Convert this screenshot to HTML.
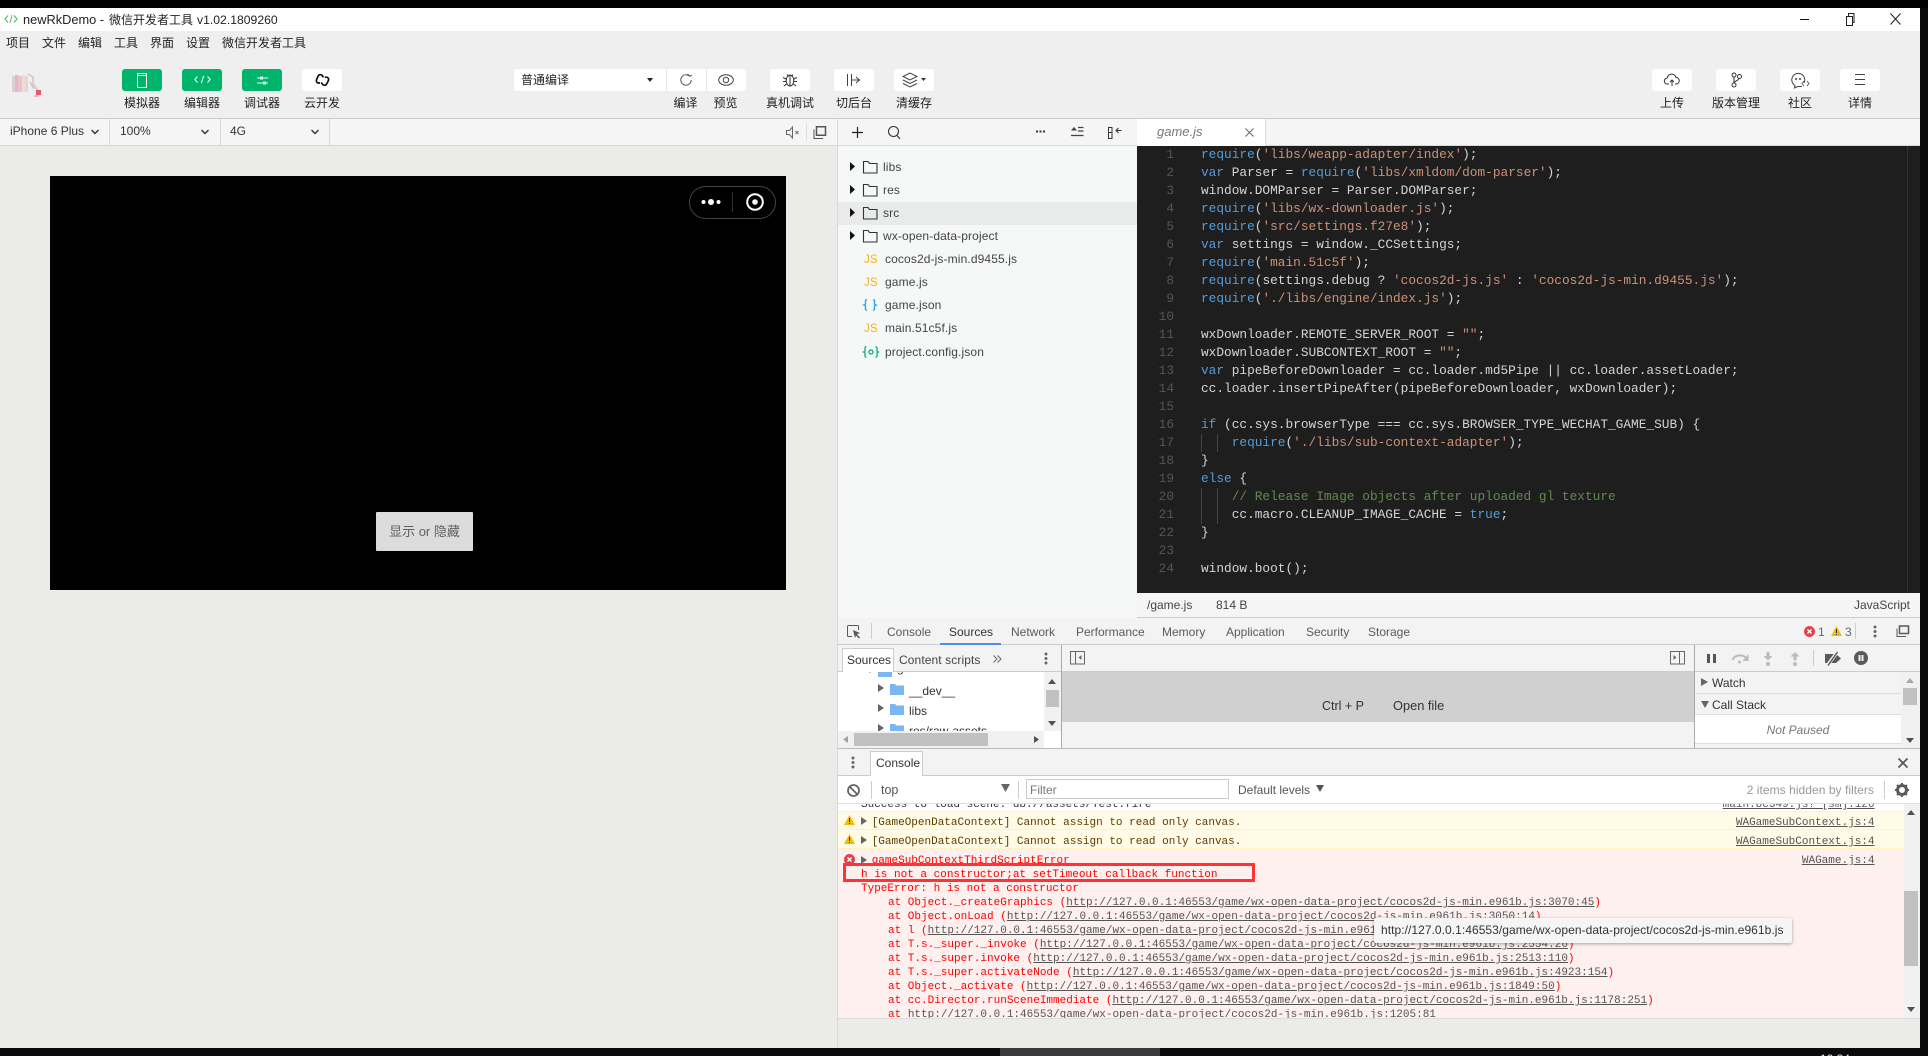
<!DOCTYPE html>
<html><head><meta charset="utf-8"><title>newRkDemo</title>
<style>
html,body{margin:0;padding:0;background:#050505;width:1928px;height:1056px;overflow:hidden}
body{position:relative;font-family:"Liberation Sans","Noto Sans CJK SC",sans-serif;font-size:12px;color:#333}
.a{position:absolute}
.t{position:absolute;white-space:nowrap;line-height:16px;height:16px}
.c{text-align:center}
svg{position:absolute;overflow:visible}
.btn{position:absolute;top:69px;height:22px;width:40px;border-radius:3px;background:#fff}
.g{background:#00b46c}
.lab{position:absolute;top:95px;line-height:16px;font-size:12px;color:#222;white-space:nowrap;text-align:center;font-family:"Noto Sans CJK SC","Liberation Sans",sans-serif}
.m{position:absolute;top:35px;line-height:16px;font-size:12px;color:#222;white-space:nowrap;font-family:"Noto Sans CJK SC",sans-serif}
.tree{position:absolute;left:0;white-space:nowrap;font-size:12px;line-height:16px;color:#444;letter-spacing:.12px}
.mono{font-family:"Liberation Mono",monospace}
#code{position:absolute;left:1201px;top:146px;font-family:"Liberation Mono",monospace;font-size:12.8px;line-height:18px;color:#d4d4d4;white-space:pre}
#nums{position:absolute;left:1140px;width:34px;top:146px;font-family:"Liberation Mono",monospace;font-size:12.8px;line-height:18px;color:#555;text-align:right;white-space:pre}
.k{color:#569cd6}.s{color:#ce9178}.cm{color:#608b4e}
.dt{position:absolute;top:624px;line-height:16px;font-size:12px;color:#5a5a5a;white-space:nowrap}
.cl{position:absolute;left:0;white-space:pre;font-family:"Liberation Mono",monospace;font-size:11px;line-height:14px;color:#f00}
.cl u{color:#545454}
.src{position:absolute;right:53.5px;white-space:pre;font-family:"Liberation Mono",monospace;font-size:11px;line-height:14px;color:#545454;text-decoration:underline}
</style></head><body>

<!-- window -->
<div class="a" style="left:0;top:8px;width:1920px;height:1040px;background:#ebebe7"></div>
<div class="a" style="left:0;top:8px;width:1920px;height:23px;background:#fff"></div>
<div class="a" style="left:0;top:31px;width:1920px;height:87px;background:#efefef"></div>
<div class="a" style="left:0;top:118px;width:1920px;height:1px;background:#ccc"></div>

<!-- title -->
<svg style="left:4px;top:14px" width="14" height="10" viewBox="0 0 14 10"><path d="M4 1.500 1 5l3 3.500M10 1.500 13 5l-3 3.500" fill="none" stroke="#5cc45c" stroke-width="1.300"/><path d="M8 1 6 9" stroke="#999" stroke-width="1"/></svg>
<div class="t" style="left:23px;top:12px;color:#222;font-size:12.800px">newRkDemo -</div>
<div class="t" style="left:109px;top:12px;color:#222;font-size:12px;font-family:'Noto Sans CJK SC',sans-serif">微信开发者工具</div>
<div class="t" style="left:197px;top:12px;color:#222;font-size:12.200px">v1.02.1809260</div>
<!-- window controls -->
<div class="a" style="left:1800px;top:19px;width:9px;height:1px;background:#111"></div>
<svg style="left:1844px;top:13px" width="11" height="13"><path d="M2.500 3.500h6v9h-6zM4.500 3.500V.5h5.500v9H8.500" fill="none" stroke="#222"/></svg>
<svg style="left:1890px;top:13px" width="11" height="12"><path d="M.5.5 10.500 11.500M10.500.5.5 11.500" stroke="#222" stroke-width="1"/></svg>

<!-- menu -->
<div class="m" style="left:6px">项目</div><div class="m" style="left:42px">文件</div><div class="m" style="left:78px">编辑</div><div class="m" style="left:114px">工具</div><div class="m" style="left:150px">界面</div><div class="m" style="left:186px">设置</div><div class="m" style="left:222px">微信开发者工具</div>

<!-- logo -->
<svg style="left:12px;top:72px;opacity:.8" width="32" height="26" viewBox="0 0 32 26">
<rect x="0" y="4" width="3" height="16" fill="#d9c9cf"/><rect x="3" y="3" width="3" height="17" fill="#e3a9bd"/><rect x="6" y="4" width="4" height="16" fill="#e7b7c6"/><rect x="10" y="3" width="3" height="17" fill="#eedbc9"/><rect x="13" y="4" width="3" height="16" fill="#dfd0d0"/>
<path d="M16 2l5 3v7l6 8" fill="none" stroke="#c9b9bb" stroke-width="1.500"/><path d="M18 10l4 7" stroke="#bbb" stroke-width="1.400"/>
<rect x="24" y="18" width="5" height="5" fill="#e7364a"/><rect x="22" y="23" width="5" height="2" fill="#e8b0b5"/>
</svg>

<!-- left toolbar buttons -->
<div class="btn g" style="left:122px"></div>
<svg style="left:137px;top:73px" width="10" height="14"><rect x=".5" y=".5" width="9" height="14" fill="none" stroke="#fff"/><path d="M1 2.500h8" stroke="#fff"/></svg>
<div class="btn g" style="left:182px"></div>
<svg style="left:194px;top:75px" width="17" height="9" viewBox="0 0 17 9" fill="none" stroke="#fff" stroke-width="1"><path d="M3.500 1.500.8 4.500l2.700 3M13.500 1.500l2.700 3-2.700 3M9.600.8 7.400 8.200"/></svg>
<div class="btn g" style="left:242px"></div>
<svg style="left:256px;top:75px" width="13" height="11" viewBox="0 0 13 11"><path d="M1 3h3M7 3h5M1 8h6M10 8h2" stroke="#bfe9d6" stroke-width="1.200"/><rect x="4" y="1.500" width="3" height="3" fill="#dff5ea"/><rect x="7" y="6.500" width="3" height="3" fill="#dff5ea"/></svg>
<div class="btn" style="left:302px"></div>
<svg style="left:315px;top:73px" width="15" height="14" viewBox="0 0 15 14" fill="none" stroke="#111" stroke-width="1.700"><path d="M8.500 4.200 7.300 2.600C6.200 1.300 4 1.400 3.200 3L1.600 6.500c-.8 1.700.2 3.500 2 3.500H5"/><path d="M6.200 9.500 7.600 11.400c1 1.300 3.200 1.200 4-.4l1.700-3.200c.9-1.700-.2-3.600-2.100-3.600H9.800"/></svg>
<div class="lab" style="left:122px;width:40px">模拟器</div><div class="lab" style="left:182px;width:40px">编辑器</div><div class="lab" style="left:242px;width:40px">调试器</div><div class="lab" style="left:302px;width:40px">云开发</div>

<!-- compile group -->
<div class="a" style="left:514px;top:69px;width:232px;height:22px;background:#fff;border-radius:3px"></div>
<div class="a" style="left:666px;top:69px;width:1px;height:22px;background:#e6e6e6"></div>
<div class="a" style="left:706px;top:69px;width:1px;height:22px;background:#e6e6e6"></div>
<div class="t" style="left:521px;top:72px;color:#222;font-family:'Noto Sans CJK SC',sans-serif">普通编译</div>
<svg style="left:647px;top:78px" width="6" height="4"><path d="M0 0h6L3 4z" fill="#222"/></svg>
<svg style="left:679px;top:73px" width="14" height="14" viewBox="0 0 14 14" fill="none" stroke="#555"><path d="M10.600 3.200A5.200 5.200 0 1 0 12.200 7"/><path d="M8.600 1 11 3.400 13 2" stroke-width="1"/></svg>
<svg style="left:718px;top:74px" width="16" height="12" viewBox="0 0 16 12" fill="none" stroke="#444"><ellipse cx="8" cy="6" rx="7.300" ry="5.200"/><circle cx="8" cy="6" r="2.700"/></svg>
<div class="lab" style="left:666px;width:39px">编译</div><div class="lab" style="left:706px;width:39px">预览</div>

<div class="btn" style="left:770px"></div>
<svg style="left:782px;top:72px" width="16" height="16" viewBox="0 0 16 16" fill="none" stroke="#333"><ellipse cx="8" cy="8.500" rx="3.800" ry="5.500"/><path d="M8 3v11M5 2.500l1.500 2M11 2.500l-1.500 2M4 7 1 5.500M4 9.500H1M4.500 12 2 14M12 7l3-1.500M12 9.500h3M11.500 12l2.500 2"/></svg>
<div class="lab" style="left:763px;width:54px">真机调试</div>
<div class="btn" style="left:834px"></div>
<svg style="left:846px;top:74px" width="16" height="12" viewBox="0 0 16 12" fill="none" stroke="#444"><path d="M1.500 0v12M5.500 0v12M5.500 6H13M10 3l3.500 3L10 9"/></svg>
<div class="lab" style="left:834px;width:40px">切后台</div>
<div class="btn" style="left:894px"></div>
<svg style="left:902px;top:72px" width="24" height="16" viewBox="0 0 24 16" fill="none" stroke="#444"><path d="M8 1 1 4.500 8 8l7-3.500zM1 8l7 3.500L15 8M1 11.500 8 15l7-3.500"/><path d="M19 6h5l-2.500 3z" fill="#333" stroke="none"/></svg>
<div class="lab" style="left:894px;width:40px">清缓存</div>

<!-- right toolbar -->
<div class="btn" style="left:1652px"></div>
<svg style="left:1664px;top:74px" width="16" height="13" viewBox="0 0 16 13" fill="none" stroke="#333"><path d="M5 10H3.500a3 3 0 0 1-.3-6A4.500 4.500 0 0 1 12 3.500 3.200 3.200 0 0 1 12 10h-1"/><path d="M8 12V6M6 8l2-2 2 2"/></svg>
<div class="btn" style="left:1716px"></div>
<svg style="left:1731px;top:72px" width="11" height="16" viewBox="0 0 11 16" fill="none" stroke="#333"><circle cx="3" cy="3" r="2"/><circle cx="8.500" cy="4.500" r="2"/><circle cx="3" cy="13" r="2"/><path d="M3 5v6M8 6.500c0 2-5 2.500-5 4.500"/></svg>
<div class="btn" style="left:1780px"></div>
<svg style="left:1791px;top:72px" width="18" height="17" viewBox="0 0 18 17" fill="none" stroke="#444"><path d="M13 11A6.500 6.500 0 1 0 4 13.500L3.500 16l3-1.500H11"/><circle cx="5" cy="7" r="1" fill="#444" stroke="none"/><circle cx="9" cy="7" r="1" fill="#444" stroke="none"/><path d="M13 9l-2 2.500 2 2.500M16 9l2 2.500-2 2.500" stroke-width=".8"/></svg>
<div class="btn" style="left:1840px"></div>
<svg style="left:1855px;top:74px" width="10" height="11"><path d="M0 .5h10M0 5.500h10M0 10.500h10" stroke="#444"/></svg>
<div class="lab" style="left:1652px;width:40px">上传</div><div class="lab" style="left:1709px;width:54px">版本管理</div><div class="lab" style="left:1780px;width:40px">社区</div><div class="lab" style="left:1840px;width:40px">详情</div>

<!-- simulator toolbar -->
<div class="a" style="left:0;top:119px;width:838px;height:26px;background:#f5f5f5;border-bottom:1px solid #d8d8d8"></div>
<div class="a" style="left:109px;top:119px;width:1px;height:26px;background:#d8d8d8"></div>
<div class="a" style="left:220px;top:119px;width:1px;height:26px;background:#d8d8d8"></div>
<div class="a" style="left:329px;top:119px;width:1px;height:26px;background:#d8d8d8"></div>
<div class="t" style="left:10px;top:123px;color:#333;font-size:12px">iPhone 6 Plus</div>
<div class="t" style="left:120px;top:123px;color:#333;font-size:12px">100%</div>
<div class="t" style="left:230px;top:123px;color:#333;font-size:12px">4G</div>
<svg style="left:91px;top:129px" width="8" height="6" fill="none" stroke="#333" stroke-width="1.400"><path d="M.5 1 4 4.500 7.500 1"/></svg>
<svg style="left:201px;top:129px" width="8" height="6" fill="none" stroke="#333" stroke-width="1.400"><path d="M.5 1 4 4.500 7.500 1"/></svg>
<svg style="left:311px;top:129px" width="8" height="6" fill="none" stroke="#333" stroke-width="1.400"><path d="M.5 1 4 4.500 7.500 1"/></svg>
<svg style="left:786px;top:126px" width="14" height="13" fill="none" stroke="#666"><path d="M.5 4.500h3l3-3.500v11l-3-3.500h-3z"/><path d="M9.500 5l3 3M12.500 5l-3 3" stroke-width=".9"/></svg>
<div class="a" style="left:806px;top:124px;width:1px;height:16px;background:#ddd"></div>
<svg style="left:813px;top:126px" width="13" height="13" fill="none" stroke="#555"><path d="M3.500 .8h9v8.500h-9z" stroke-width="1.500"/><path d="M1 3.500v9h9" stroke-width="1"/></svg>
<div class="a" style="left:837px;top:119px;width:1px;height:930px;background:#d8d8d8"></div>

<!-- game -->
<div class="a" style="left:50px;top:176px;width:736px;height:414px;background:#000"></div>
<div class="a" style="left:689px;top:186px;width:85px;height:31px;border:1px solid #444;border-radius:17px;background:#000"></div>
<svg style="left:700px;top:196px" width="22" height="12"><circle cx="3.500" cy="6" r="2" fill="#fff"/><circle cx="11" cy="6" r="3" fill="#fff"/><circle cx="18.500" cy="6" r="2" fill="#fff"/></svg>
<div class="a" style="left:732px;top:192px;width:1px;height:20px;background:#333"></div>
<svg style="left:745px;top:192px" width="20" height="20"><circle cx="10" cy="10" r="7.800" fill="none" stroke="#fff" stroke-width="2"/><circle cx="10" cy="10" r="2.800" fill="#fff"/></svg>
<div class="a" style="left:376px;top:512px;width:97px;height:39px;background:#dcdcdc;border-radius:1px"></div>
<div class="a c" style="left:376px;top:523px;width:97px;line-height:17px;font-size:13px;color:#5f5f5f;font-family:'Liberation Sans','Noto Sans CJK SC',sans-serif">显示 or 隐藏</div>

<!-- file tree -->
<div class="a" style="left:838px;top:119px;width:299px;height:26px;background:#f5f5f5;border-bottom:1px solid #d8d8d8"></div>
<div class="a" style="left:838px;top:146px;width:299px;height:472px;background:#f6f7f7"></div>
<div class="a" style="left:838px;top:202px;width:299px;height:23px;background:#e9eaea"></div>
<svg style="left:852px;top:127px" width="12" height="12"><path d="M5.500 0v11M0 5.500h11" stroke="#222" stroke-width="1.200"/></svg>
<svg style="left:888px;top:126px" width="13" height="14" fill="none" stroke="#333" stroke-width="1.100"><circle cx="5.500" cy="5.500" r="5"/><path d="M9 9.500l3 3.500"/></svg>
<svg style="left:1036px;top:130px" width="9" height="3"><path d="M0 .5h2v2H0zM3.500 .5h2v2h-2zM7 .5h2v2H7z" fill="#333"/></svg>
<svg style="left:1071px;top:127px" width="13" height="10"><path d="M3 0 6 3.500H0z" fill="#444"/><path d="M7 .5h5.500M7 4h5.500M0 8.500h12.500" stroke="#444" stroke-width="1.200"/></svg>
<svg style="left:1108px;top:127px" width="14" height="13" fill="none" stroke="#333"><rect x=".5" y=".5" width="3.500" height="11"/><path d="M.5 5.500h3.500M8 3.500h5.500M10.500 1 8 3.500 10.500 6" stroke-width="1"/></svg>

<!-- tree rows -->
<svg style="left:850px;top:162px" width="6" height="190" fill="#111"><path d="M0 0v9l5-4.500zM0 23v9l5-4.500zM0 46v9l5-4.500zM0 69v9l5-4.500z"/></svg>
<svg style="left:863px;top:160px" width="15" height="90" fill="none" stroke="#333" stroke-width="1.100"><path d="M.5 1.500h4.500l1.500 2h7.500v9.500H.5z"/><path d="M.5 24.500h4.500l1.500 2h7.500v9.500H.5zM.5 47.500h4.500l1.500 2h7.500v9.500H.5zM.5 70.500h4.500l1.500 2h7.500v9.500H.5z"/></svg>
<div class="tree" style="left:883px;top:159px">libs</div>
<div class="tree" style="left:883px;top:182px">res</div>
<div class="tree" style="left:883px;top:205px">src</div>
<div class="tree" style="left:883px;top:228px">wx-open-data-project</div>
<div class="tree" style="left:885px;top:251px">cocos2d-js-min.d9455.js</div>
<div class="tree" style="left:885px;top:274px">game.js</div>
<div class="tree" style="left:885px;top:297px">game.json</div>
<div class="tree" style="left:885px;top:320px">main.51c5f.js</div>
<div class="tree" style="left:885px;top:344px">project.config.json</div>
<div class="t" style="left:864px;top:252px;color:#f5b21c;font-size:11.500px;letter-spacing:.3px">JS</div>
<div class="t" style="left:864px;top:275px;color:#f5b21c;font-size:11.500px;letter-spacing:.3px">JS</div>
<div class="t" style="left:864px;top:321px;color:#f5b21c;font-size:11.500px;letter-spacing:.3px">JS</div>
<svg style="left:863px;top:299px" width="14" height="12" fill="none" stroke="#26a6e8" stroke-width="1.400"><path d="M4 .7C2 .7 2.500 2.500 2.500 4S2.500 5.500 1 6c1.500.5 1.500 .5 1.500 2S2 11.300 4 11.300M10 .7c2 0 1.500 1.800 1.500 3.300s0 1.500 1.500 2c-1.500.5-1.500.5-1.500 2s.5 3.300-1.500 3.300"/></svg>
<svg style="left:863px;top:346px" width="16" height="12" fill="none" stroke="#12b87a" stroke-width="1.400"><path d="M3.500 .7C1.500 .7 2 2.500 2 4S2 5.500.7 6C2 6.500 2 6.500 2 8s-.5 3.300 1.500 3.300M12.500 .7c2 0 1.500 1.800 1.500 3.300s0 1.500 1.300 2C14 6.500 14 6.500 14 8s.5 3.300-1.500 3.300"/><circle cx="8" cy="6" r="2"/></svg>

<!-- editor tab -->
<div class="a" style="left:1137px;top:119px;width:783px;height:27px;background:#f5f5f5;"></div>
<div class="a" style="left:1137px;top:145px;width:783px;height:1px;background:#d8d8d8"></div>
<div class="a" style="left:1137px;top:119px;width:129px;height:27px;background:#fff;border-right:1px solid #ddd;box-sizing:border-box"></div>
<div class="t" style="left:1157px;top:124px;font-style:italic;color:#777;font-size:13px">game.js</div>
<svg style="left:1245px;top:128px" width="9" height="9"><path d="M.5.5l8 8M8.500.5l-8 8" stroke="#666" stroke-width="1"/></svg>

<!-- code -->
<div class="a" style="left:1137px;top:146px;width:783px;height:447px;background:#1e1e1e"></div>
<div class="a" style="left:1907px;top:146px;width:1px;height:447px;background:#333"></div>
<div class="a" style="left:1201px;top:434px;width:1px;height:18px;background:#444"></div>
<div class="a" style="left:1217px;top:434px;width:1px;height:18px;background:#444"></div>
<div class="a" style="left:1201px;top:488px;width:1px;height:36px;background:#444"></div>
<div class="a" style="left:1217px;top:488px;width:1px;height:36px;background:#444"></div>
<div id="nums">1
2
3
4
5
6
7
8
9
10
11
12
13
14
15
16
17
18
19
20
21
22
23
24</div>
<div id="code"><span class="k">require</span>(<span class="s">'libs/weapp-adapter/index'</span>);
<span class="k">var</span> Parser = <span class="k">require</span>(<span class="s">'libs/xmldom/dom-parser'</span>);
window.DOMParser = Parser.DOMParser;
<span class="k">require</span>(<span class="s">'libs/wx-downloader.js'</span>);
<span class="k">require</span>(<span class="s">'src/settings.f27e8'</span>);
<span class="k">var</span> settings = window._CCSettings;
<span class="k">require</span>(<span class="s">'main.51c5f'</span>);
<span class="k">require</span>(settings.debug ? <span class="s">'cocos2d-js.js'</span> : <span class="s">'cocos2d-js-min.d9455.js'</span>);
<span class="k">require</span>(<span class="s">'./libs/engine/index.js'</span>);

wxDownloader.REMOTE_SERVER_ROOT = <span class="s">""</span>;
wxDownloader.SUBCONTEXT_ROOT = <span class="s">""</span>;
<span class="k">var</span> pipeBeforeDownloader = cc.loader.md5Pipe || cc.loader.assetLoader;
cc.loader.insertPipeAfter(pipeBeforeDownloader, wxDownloader);

<span class="k">if</span> (cc.sys.browserType === cc.sys.BROWSER_TYPE_WECHAT_GAME_SUB) {
    <span class="k">require</span>(<span class="s">'./libs/sub-context-adapter'</span>);
}
<span class="k">else</span> {
    <span class="cm">// Release Image objects after uploaded gl texture</span>
    cc.macro.CLEANUP_IMAGE_CACHE = <span class="k">true</span>;
}

window.boot();</div>

<!-- status bar -->
<div class="a" style="left:1137px;top:593px;width:783px;height:24px;background:#f5f5f5;border-bottom:1px solid #ccc"></div>
<div class="t" style="left:1147px;top:597px;color:#444;font-size:12px">/game.js</div>
<div class="t" style="left:1216px;top:597px;color:#444;font-size:12px">814 B</div>
<div class="t" style="right:18px;top:597px;color:#444;font-size:12px">JavaScript</div>

<!-- devtools -->
<div class="a" style="left:838px;top:618px;width:1082px;height:400px;background:#f3f3f3"></div>
<div class="a" style="left:838px;top:644px;width:1082px;height:1px;background:#ccc"></div>
<svg style="left:847px;top:625px" width="14" height="14" fill="none" stroke="#5a5a5a"><path d="M5 11.500H1.500a1 1 0 0 1-1-1v-9a1 1 0 0 1 1-1h9a1 1 0 0 1 1 1V5"/><path d="M6 5l7 3-3 1.200L13 12.500 12 13.500 9 10.500 8 13z" fill="#5a5a5a" stroke="none"/></svg>
<div class="a" style="left:871px;top:623px;width:1px;height:16px;background:#ccc"></div>
<div class="dt" style="left:887px">Console</div>
<div class="dt" style="left:949px;color:#333">Sources</div>
<div class="dt" style="left:1011px">Network</div>
<div class="dt" style="left:1076px">Performance</div>
<div class="dt" style="left:1162px">Memory</div>
<div class="dt" style="left:1226px">Application</div>
<div class="dt" style="left:1306px">Security</div>
<div class="dt" style="left:1368px">Storage</div>
<div class="a" style="left:940px;top:643px;width:61px;height:2px;background:#4a8ee6"></div>
<!-- error/warn counters -->
<svg style="left:1804px;top:626px" width="11" height="11"><circle cx="5.500" cy="5.500" r="5.500" fill="#e8404a"/><path d="M3.500 3.500l4 4M7.500 3.500l-4 4" stroke="#fff" stroke-width="1.300"/></svg>
<div class="t" style="left:1818px;top:624px;color:#666;font-size:12px">1</div>
<svg style="left:1831px;top:626px" width="11" height="10"><path d="M5.500 0 11 10H0z" fill="#f2bb0c"/><path d="M5.500 3v4M5.500 8v1" stroke="#333" stroke-width="1"/></svg>
<div class="t" style="left:1845px;top:624px;color:#666;font-size:12px">3</div>
<div class="a" style="left:1855px;top:623px;width:1px;height:16px;background:#ccc"></div>
<svg style="left:1873px;top:625px" width="4" height="13" fill="#666"><circle cx="2" cy="2" r="1.500"/><circle cx="2" cy="6.500" r="1.500"/><circle cx="2" cy="11" r="1.500"/></svg>
<svg style="left:1896px;top:625px" width="13" height="12" fill="none" stroke="#5a5a5a"><path d="M3.500 1h9v7.500h-9z" stroke-width="1.500"/><path d="M1 3.500v8h9" stroke-width="1"/></svg>

<!-- sources panel row -->
<div class="a" style="left:838px;top:671px;width:1082px;height:1px;background:#ccc"></div>
<div class="a" style="left:1061px;top:645px;width:1px;height:103px;background:#aaa"></div>
<div class="a" style="left:1694px;top:645px;width:1px;height:103px;background:#aaa"></div>
<div class="a" style="left:842px;top:648px;width:52px;height:24px;background:#fff;border:1px solid #ccc;border-bottom:none;box-sizing:border-box"></div>
<div class="t" style="left:847px;top:652px;color:#333">Sources</div>
<div class="t" style="left:899px;top:652px;color:#444;letter-spacing:.1px">Content scripts</div>
<svg style="left:993px;top:655px" width="9" height="9" fill="none" stroke="#666"><path d="M.5.500 4 4 .5 7.500M4.500.500 8 4 4.500 7.500"/></svg>
<svg style="left:1044px;top:652px" width="4" height="13" fill="#666"><circle cx="2" cy="2" r="1.500"/><circle cx="2" cy="6.500" r="1.500"/><circle cx="2" cy="11" r="1.500"/></svg>
<!-- navigator -->
<div class="a" style="left:838px;top:672px;width:223px;height:76px;background:#fff;overflow:hidden">
  <svg style="left:29px;top:-3px" width="8" height="6"><path d="M0 0h6L3 4z" fill="#666"/></svg>
  <div class="a" style="left:40px;top:-6px;width:14px;height:11px;background:#7ab6f3"></div>
  <div class="t" style="left:59px;top:-12px;color:#333">game</div>
  <svg style="left:40px;top:12px" width="7" height="9"><path d="M0 0v8l6-4z" fill="#666"/></svg>
  <svg style="left:52px;top:11px" width="14" height="12"><path d="M0 1h5l1.500 1.500H14V12H0z" fill="#7ab6f3"/></svg>
  <div class="t" style="left:71px;top:11px;color:#333">__dev__</div>
  <svg style="left:40px;top:32px" width="7" height="9"><path d="M0 0v8l6-4z" fill="#666"/></svg>
  <svg style="left:52px;top:31px" width="14" height="12"><path d="M0 1h5l1.500 1.500H14V12H0z" fill="#7ab6f3"/></svg>
  <div class="t" style="left:71px;top:31px;color:#333">libs</div>
  <svg style="left:40px;top:52px" width="7" height="9"><path d="M0 0v8l6-4z" fill="#666"/></svg>
  <svg style="left:52px;top:51px" width="14" height="12"><path d="M0 1h5l1.500 1.500H14V12H0z" fill="#7ab6f3"/></svg>
  <div class="t" style="left:71px;top:51px;color:#333">res/raw-assets</div>
  <div class="a" style="left:0;top:59px;width:206px;height:17px;background:#f1f1f1"></div>
  <div class="a" style="left:16px;top:61px;width:134px;height:13px;background:#c1c1c1"></div>
  <svg style="left:5px;top:64px" width="6" height="8"><path d="M5 0v7L0 3.500z" fill="#a0a0a0"/></svg>
  <svg style="left:196px;top:64px" width="6" height="8"><path d="M0 0v7l5-3.500z" fill="#505050"/></svg>
  <div class="a" style="left:206px;top:0;width:17px;height:59px;background:#f1f1f1"></div>
  <div class="a" style="left:208px;top:18px;width:13px;height:17px;background:#c1c1c1"></div>
  <svg style="left:210px;top:7px" width="8" height="6"><path d="M0 5h8L4 0z" fill="#505050"/></svg>
  <svg style="left:210px;top:49px" width="8" height="6"><path d="M0 0h8L4 5z" fill="#505050"/></svg>
</div>
<!-- center -->
<svg style="left:1070px;top:651px" width="15" height="14" fill="none" stroke="#666"><rect x=".5" y=".5" width="14" height="12.500"/><path d="M5.500 .5v12.500"/><path d="M11.500 4v5l-3-2.500z" fill="#666" stroke="none"/></svg>
<svg style="left:1670px;top:651px" width="15" height="14" fill="none" stroke="#666"><rect x=".5" y=".5" width="14" height="12.500"/><path d="M9.500 .5v12.500"/><path d="M3.500 4v5l3-2.500z" fill="#666" stroke="none"/></svg>
<div class="a" style="left:1062px;top:672px;width:632px;height:50px;background:#d0d0d0"></div>
<div class="t" style="left:1322px;top:698px;color:#333;font-size:12.500px">Ctrl + P</div>
<div class="t" style="left:1393px;top:698px;color:#333;font-size:12.800px">Open file</div>
<!-- debugger icons -->
<svg style="left:1707px;top:654px" width="9" height="9"><path d="M0 0h3v9H0zM6 0h3v9H6z" fill="#555"/></svg>
<svg style="left:1731px;top:653px" width="18" height="10" fill="none"><path d="M1.500 7A7.500 6 0 0 1 15 5" stroke="#bbb" stroke-width="2"/><path d="M17.500 1v7h-6z" fill="#bbb"/><circle cx="8.500" cy="9" r="1.500" fill="#bbb"/></svg>
<svg style="left:1763px;top:652px" width="10" height="14" fill="#bbb"><path d="M3.500 0h3v4H9.500L5 8.500.5 4h3z"/><circle cx="5" cy="12" r="2"/></svg>
<svg style="left:1790px;top:652px" width="10" height="14" fill="#bbb"><path d="M5 0l4.500 4.500h-3v4h-3v-4h-3z"/><circle cx="5" cy="12" r="2"/></svg>
<div class="a" style="left:1813px;top:650px;width:1px;height:16px;background:#ccc"></div>
<svg style="left:1824px;top:651px" width="18" height="15"><path d="M1 3h11l5 4.500L12 12H1z" fill="#5a5a5a"/><path d="M3 15 14 0" stroke="#f3f3f3" stroke-width="3.500"/><path d="M4 14.500 13.500 1" stroke="#5a5a5a" stroke-width="1.500"/></svg>
<svg style="left:1854px;top:651px" width="14" height="14"><circle cx="7" cy="7" r="7" fill="#5a5a5a"/><path d="M4.500 4h2v6h-2zM7.500 4h2v6h-2z" fill="#f3f3f3"/></svg>
<!-- side panes -->
<div class="a" style="left:1695px;top:693px;width:206px;height:1px;background:#ddd"></div>
<div class="a" style="left:1695px;top:714px;width:206px;height:1px;background:#ddd"></div>
<div class="a" style="left:1695px;top:715px;width:206px;height:28px;background:#fff"></div>
<div class="a" style="left:1695px;top:743px;width:206px;height:1px;background:#ddd"></div>
<svg style="left:1701px;top:678px" width="8" height="8"><path d="M0 0v8l7-4z" fill="#666"/></svg>
<svg style="left:1701px;top:701px" width="8" height="7"><path d="M0 0h8L4 7z" fill="#666"/></svg>
<div class="t" style="left:1712px;top:675px;color:#333">Watch</div>
<div class="t" style="left:1712px;top:697px;color:#333">Call Stack</div>
<div class="t c" style="left:1695px;top:722px;width:206px;color:#777;font-style:italic;">Not Paused</div>
<div class="a" style="left:1901px;top:672px;width:19px;height:76px;background:#f1f1f1"></div>
<div class="a" style="left:1903px;top:688px;width:14px;height:17px;background:#c1c1c1"></div>
<svg style="left:1906px;top:678px" width="8" height="5"><path d="M0 5h8L4 0z" fill="#a8a8a8"/></svg>
<svg style="left:1906px;top:738px" width="8" height="5"><path d="M0 0h8L4 5z" fill="#505050"/></svg>

<!-- drawer -->
<div class="a" style="left:838px;top:748px;width:1082px;height:1px;background:#bbb"></div>
<div class="a" style="left:838px;top:775px;width:1082px;height:1px;background:#ccc"></div>
<svg style="left:851px;top:756px" width="4" height="13" fill="#666"><circle cx="2" cy="2" r="1.500"/><circle cx="2" cy="6.500" r="1.500"/><circle cx="2" cy="11" r="1.500"/></svg>
<div class="a" style="left:870px;top:751px;width:53px;height:25px;background:#fff;border:1px solid #ccc;border-bottom:none;box-sizing:border-box"></div>
<div class="t" style="left:876px;top:755px;color:#333">Console</div>
<svg style="left:1898px;top:758px" width="10" height="10"><path d="M.5.5l9 9M9.500.5l-9 9" stroke="#5a5a5a" stroke-width="1.800"/></svg>
<div class="a" style="left:838px;top:776px;width:1082px;height:27px;background:#fff"></div>
<div class="a" style="left:838px;top:803px;width:1082px;height:1px;background:#ddd"></div>
<svg style="left:847px;top:784px" width="13" height="13" fill="none" stroke="#666" stroke-width="1.800"><circle cx="6.500" cy="6.500" r="5.500"/><path d="M2.500 2.500l8 8"/></svg>
<div class="a" style="left:871px;top:781px;width:1px;height:18px;background:#ccc"></div>
<div class="t" style="left:881px;top:782px;color:#555;font-size:12.500px">top</div>
<svg style="left:1001px;top:784px" width="9" height="8"><path d="M0 0h9L4.500 8z" fill="#666"/></svg>
<div class="a" style="left:1018px;top:781px;width:1px;height:18px;background:#ccc"></div>
<div class="a" style="left:1026px;top:779px;width:203px;height:20px;border:1px solid #ccc;background:#fff;box-sizing:border-box"></div>
<div class="t" style="left:1030px;top:782px;color:#777;font-size:12px">Filter</div>
<div class="t" style="left:1238px;top:782px;color:#555;font-size:12px">Default levels</div>
<svg style="left:1316px;top:785px" width="8" height="7"><path d="M0 0h8L4 7z" fill="#555"/></svg>
<div class="t" style="right:54px;top:782px;color:#999;font-size:12px;letter-spacing:.05px">2 items hidden by filters</div>
<div class="a" style="left:1884px;top:781px;width:1px;height:18px;background:#ccc"></div>
<svg style="left:1895px;top:783px" width="14" height="14"><circle cx="7" cy="7" r="4.500" fill="none" stroke="#5a5a5a" stroke-width="3"/><path d="M7 0v14M0 7h14M2 2l10 10M12 2 2 12" stroke="#5a5a5a" stroke-width="2" stroke-dasharray="2.500 9 2.500 0"/></svg>

<!-- console body -->
<div class="a" style="left:838px;top:804px;width:1082px;height:214px;overflow:hidden;background:#fff">
  <div class="a" style="left:0;top:7px;width:1066px;height:19px;background:#fffbe6;border-bottom:1px solid #fff3c4;box-sizing:border-box;border-top:1px solid #fff3c4"></div>
  <div class="a" style="left:0;top:26px;width:1066px;height:19px;background:#fffbe6;border-bottom:1px solid #fff3c4;box-sizing:border-box"></div>
  <div class="a" style="left:0;top:45px;width:1066px;height:170px;background:#fff0f0"></div>
  <div class="cl" style="left:23px;top:-6px;color:#333">Success to load scene: db://assets/Test.fire</div>
  <div class="src" style="right:45.500px;top:-6px">main.bc349.js? [sm]:126</div>

  <svg style="left:6px;top:11px" width="11" height="10"><path d="M5.500 0 11 10H0z" fill="#f2bb0c"/><path d="M5.500 3v4M5.500 8v1" stroke="#333" stroke-width="1"/></svg>
  <svg style="left:23px;top:13px" width="7" height="8"><path d="M0 0v8l6-4z" fill="#666"/></svg>
  <div class="cl" style="left:33.700px;top:12px;color:#5c3c00">[GameOpenDataContext] Cannot assign to read only canvas.</div>
  <div class="src" style="right:45.500px;top:12px">WAGameSubContext.js:4</div>

  <svg style="left:6px;top:30px" width="11" height="10"><path d="M5.500 0 11 10H0z" fill="#f2bb0c"/><path d="M5.500 3v4M5.500 8v1" stroke="#333" stroke-width="1"/></svg>
  <svg style="left:23px;top:32px" width="7" height="8"><path d="M0 0v8l6-4z" fill="#666"/></svg>
  <div class="cl" style="left:33.700px;top:31px;color:#5c3c00">[GameOpenDataContext] Cannot assign to read only canvas.</div>
  <div class="src" style="right:45.500px;top:31px">WAGameSubContext.js:4</div>

  <svg style="left:6px;top:50px" width="11" height="11"><circle cx="5.500" cy="5.500" r="5.500" fill="#e8404a"/><path d="M3.500 3.500l4 4M7.500 3.500l-4 4" stroke="#fff" stroke-width="1.300"/></svg>
  <svg style="left:23px;top:52px" width="7" height="8"><path d="M0 0v8l6-4z" fill="#666"/></svg>
  <div class="cl" style="left:33.700px;top:50px">gameSubContextThirdScriptError</div>
  <div class="src" style="right:45.500px;top:50px">WAGame.js:4</div>

  <div class="a" style="left:0;top:61px;width:1066px;height:8px;background:#fff0f0"></div>
  <div class="cl" style="left:23px;top:64px">h is not a constructor;at setTimeout callback function</div>
  <div class="cl" style="left:23px;top:78px">TypeError: h is not a constructor</div>
  <div class="cl" style="left:50px;top:92px">at Object._createGraphics (<u>http://127.0.0.1:46553/game/wx-open-data-project/cocos2d-js-min.e961b.js:3070:45</u>)</div>
  <div class="cl" style="left:50px;top:106px">at Object.onLoad (<u>http://127.0.0.1:46553/game/wx-open-data-project/cocos2d-js-min.e961b.js:3050:14</u>)</div>
  <div class="cl" style="left:50px;top:120px">at l (<u>http://127.0.0.1:46553/game/wx-open-data-project/cocos2d-js-min.e961b.js:3030:23</u>)</div>
  <div class="cl" style="left:50px;top:134px">at T.s._super._invoke (<u>http://127.0.0.1:46553/game/wx-open-data-project/cocos2d-js-min.e961b.js:2554:26</u>)</div>
  <div class="cl" style="left:50px;top:148px">at T.s._super.invoke (<u>http://127.0.0.1:46553/game/wx-open-data-project/cocos2d-js-min.e961b.js:2513:110</u>)</div>
  <div class="cl" style="left:50px;top:162px">at T.s._super.activateNode (<u>http://127.0.0.1:46553/game/wx-open-data-project/cocos2d-js-min.e961b.js:4923:154</u>)</div>
  <div class="cl" style="left:50px;top:176px">at Object._activate (<u>http://127.0.0.1:46553/game/wx-open-data-project/cocos2d-js-min.e961b.js:1849:50</u>)</div>
  <div class="cl" style="left:50px;top:190px">at cc.Director.runSceneImmediate (<u>http://127.0.0.1:46553/game/wx-open-data-project/cocos2d-js-min.e961b.js:1178:251</u>)</div>
  <div class="cl" style="left:50px;top:204px">at <span style="color:#545454">http://127.0.0.1:46553/game/wx-open-data-project/cocos2d-js-min.e961b.js:1205:81</span></div>

  <!-- scrollbar -->
  <div class="a" style="left:1066px;top:0;width:16px;height:214px;background:#f1f1f1"></div>
  <div class="a" style="left:1066px;top:87px;width:14px;height:75px;background:#c1c1c1"></div>
  <svg style="left:1069px;top:6px" width="8" height="5"><path d="M0 5h8L4 0z" fill="#505050"/></svg>
  <svg style="left:1069px;top:203px" width="8" height="5"><path d="M0 0h8L4 5z" fill="#505050"/></svg>
</div>
<div class="a" style="left:838px;top:1018px;width:1082px;height:30px;background:#ebebe7;border-top:1px solid #ddd;box-sizing:border-box"></div>

<!-- red annotation -->
<div class="a" style="left:843px;top:863px;width:412px;height:19px;border:3px solid #f33;box-sizing:border-box"></div>

<!-- tooltip -->
<div class="a" style="left:1374px;top:918px;width:418px;height:25px;background:#f5f5f5;border-radius:2px;box-shadow:0 1px 3px rgba(0,0,0,.35)"></div>
<div class="t" style="left:1381px;top:922px;color:#333;font-size:12px;letter-spacing:.05px">http://127.0.0.1:46553/game/wx-open-data-project/cocos2d-js-min.e961b.js</div>

<!-- bottom black / taskbar -->
<div class="a" style="left:0;top:1048px;width:1928px;height:8px;background:#0a0a0a;overflow:hidden">
  <div class="a" style="left:1000px;top:0;width:160px;height:8px;background:#3a3a3a"></div>
  <div class="t" style="left:1820px;top:3px;color:#ddd;font-size:12px">12:34</div>
</div>
<div class="a" style="left:1920px;top:8px;width:8px;height:1040px;background:#0a0a0a"></div>
<div class="a" style="left:0;top:0;width:1928px;height:8px;background:#000"></div>
</body></html>
